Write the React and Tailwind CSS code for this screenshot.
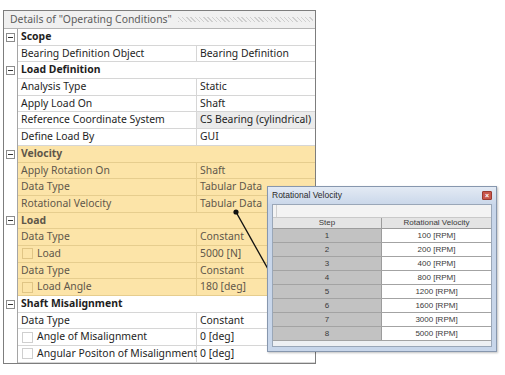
import React from "react";

const rows = [
  { group: true, label: "Scope" },
  { label: "Bearing Definition Object", value: "Bearing Definition" },
  { group: true, label: "Load Definition" },
  { label: "Analysis Type", value: "Static" },
  { label: "Apply Load On", value: "Shaft" },
  { label: "Reference Coordinate System", value: "CS Bearing (cylindrical)", shaded: true },
  { label: "Define Load By", value: "GUI" },
  { group: true, label: "Velocity", hl: true },
  { label: "Apply Rotation On", value: "Shaft", hl: true },
  { label: "Data Type", value: "Tabular Data", hl: true },
  { label: "Rotational Velocity", value: "Tabular Data", hl: true },
  { group: true, label: "Load", hl: true },
  { label: "Data Type", value: "Constant", hl: true },
  { label: "Load", value: "5000 [N]", hl: true, check: true },
  { label: "Data Type", value: "Constant", hl: true },
  { label: "Load Angle", value: "180 [deg]", hl: true, check: true },
  { group: true, label: "Shaft Misalignment" },
  { label: "Data Type", value: "Constant" },
  { label: "Angle of Misalignment", value: "0 [deg]", check: true },
  { label: "Angular Positon of Misalignment", value: "0 [deg]", check: true },
];

const table = [
  [1, "100 [RPM]"],
  [2, "200 [RPM]"],
  [3, "400 [RPM]"],
  [4, "800 [RPM]"],
  [5, "1200 [RPM]"],
  [6, "1600 [RPM]"],
  [7, "3000 [RPM]"],
  [8, "5000 [RPM]"],
];

const Row = ({ row }) => {
  const bg = row.hl ? "bg-[#fce4a8]" : "bg-white";
  const line = row.hl ? "border-[#e6cd8e]" : "border-[#d6d6d6]";
  const text = row.hl ? "text-[#5f574a]" : "text-[#1e1e1e]";
  return (
    <div className="flex h-[16.7px]">
      <div className="w-[14px] shrink-0 bg-white border-r border-[#a5a5a5] flex items-center justify-center">
        {row.group && (
          <div className="w-[9px] h-[9px] border border-[#8c8c8c] bg-white flex items-center justify-center">
            <div className="w-[5px] h-px bg-[#333]" />
          </div>
        )}
      </div>
      {row.group ? (
        <div className={`flex-1 flex items-center pl-[3px] border-b ${line} ${bg} ${text} font-bold`}>
          {row.label}
        </div>
      ) : (
        <>
          <div className={`w-[179px] shrink-0 flex items-center pl-[3px] border-b border-r ${line} ${bg} ${text}`}>
            {row.check && (
              <div
                className={`w-[11px] h-[11px] shrink-0 ml-px mr-[4px] border ${
                  row.hl ? "border-[#e0c585]" : "border-[#cfcfcf] bg-white"
                }`}
              />
            )}
            <span className="whitespace-nowrap">{row.label}</span>
          </div>
          <div
            className={`flex-1 flex items-center pl-[3px] border-b ${line} ${
              row.shaded ? "bg-[#ebebeb]" : bg
            } ${text} whitespace-nowrap overflow-hidden`}
          >
            {row.value}
          </div>
        </>
      )}
    </div>
  );
};

const Popup = () => (
  <div className="absolute left-[267px] top-[186px] w-[230px] h-[166px] border border-[#8797ae] bg-[#c8d6ea] flex flex-col px-[4px] pb-[4px] shadow-[1px_1px_2px_rgba(0,0,0,0.25)] font-['Liberation_Sans',sans-serif]">
    <div className="h-[17px] shrink-0 flex items-center justify-between bg-[linear-gradient(#e3eaf4,#cbd8ea)] -mx-[4px] px-[4px]">
      <span className="text-[8.5px] text-[#2a2a2a]">Rotational Velocity</span>
      <div className="w-[10px] h-[9px] rounded-[1px] bg-[#c8564a] border border-[#9a3a30] flex items-center justify-center text-white text-[7px] leading-none font-bold">
        ×
      </div>
    </div>
    <div className="flex-1 bg-[#eef0f3] border border-[#9aa7b8] flex flex-col">
      <div className="h-[13px] shrink-0 bg-[#f3f3f3] border-b border-[#c9c9c9] flex">
        <div className="ml-[3px] w-px h-full bg-white border-l border-[#d0d0d0]" />
      </div>
      <div className="flex h-[11px] text-[8px] text-[#3a3a3a] bg-[#e4e4e4] border-b border-[#9c9c9c]">
        <div className="w-[109px] flex items-center justify-center border-r border-[#9c9c9c]">Step</div>
        <div className="flex-1 flex items-center justify-center">Rotational Velocity</div>
      </div>
      {table.map(([step, val]) => (
        <div key={step} className="flex h-[14px] text-[8px] text-[#3a3a3a] border-b border-[#a3a3a3]">
          <div className="w-[109px] flex items-center justify-center bg-[#c2c2c2] border-r border-[#9c9c9c]">{step}</div>
          <div className="flex-1 flex items-center justify-center bg-white">{val}</div>
        </div>
      ))}
    </div>
  </div>
);

export default function App() {
  return (
    <div className="relative w-[505px] h-[375px] bg-white overflow-hidden font-['Noto_Sans',sans-serif] text-[10.4px]">
      <div className="ml-[3px] mt-[10px] w-[313px] border border-[#7d7d7d]">
        <div className="h-[18px] flex items-center bg-[#f0f0f0] border-b border-[#b4b4b4] pl-[6px] pr-[2px]">
          <span className="text-[10.4px] text-[#5c5c5c] whitespace-nowrap">Details of "Operating Conditions"</span>
          <div className="flex-1 h-[5px] ml-[6px] bg-[repeating-linear-gradient(45deg,#cfcfcf_0_1px,transparent_1px_3px)]" />
        </div>
        {rows.map((r, i) => (
          <Row key={i} row={r} />
        ))}
      </div>
      <svg className="absolute left-0 top-0 pointer-events-none" width="505" height="375">
        <line x1="236" y1="212" x2="268" y2="269" stroke="#111" strokeWidth="1.4" />
        <circle cx="236" cy="212" r="2.6" fill="#111" />
      </svg>
      <Popup />
    </div>
  );
}
